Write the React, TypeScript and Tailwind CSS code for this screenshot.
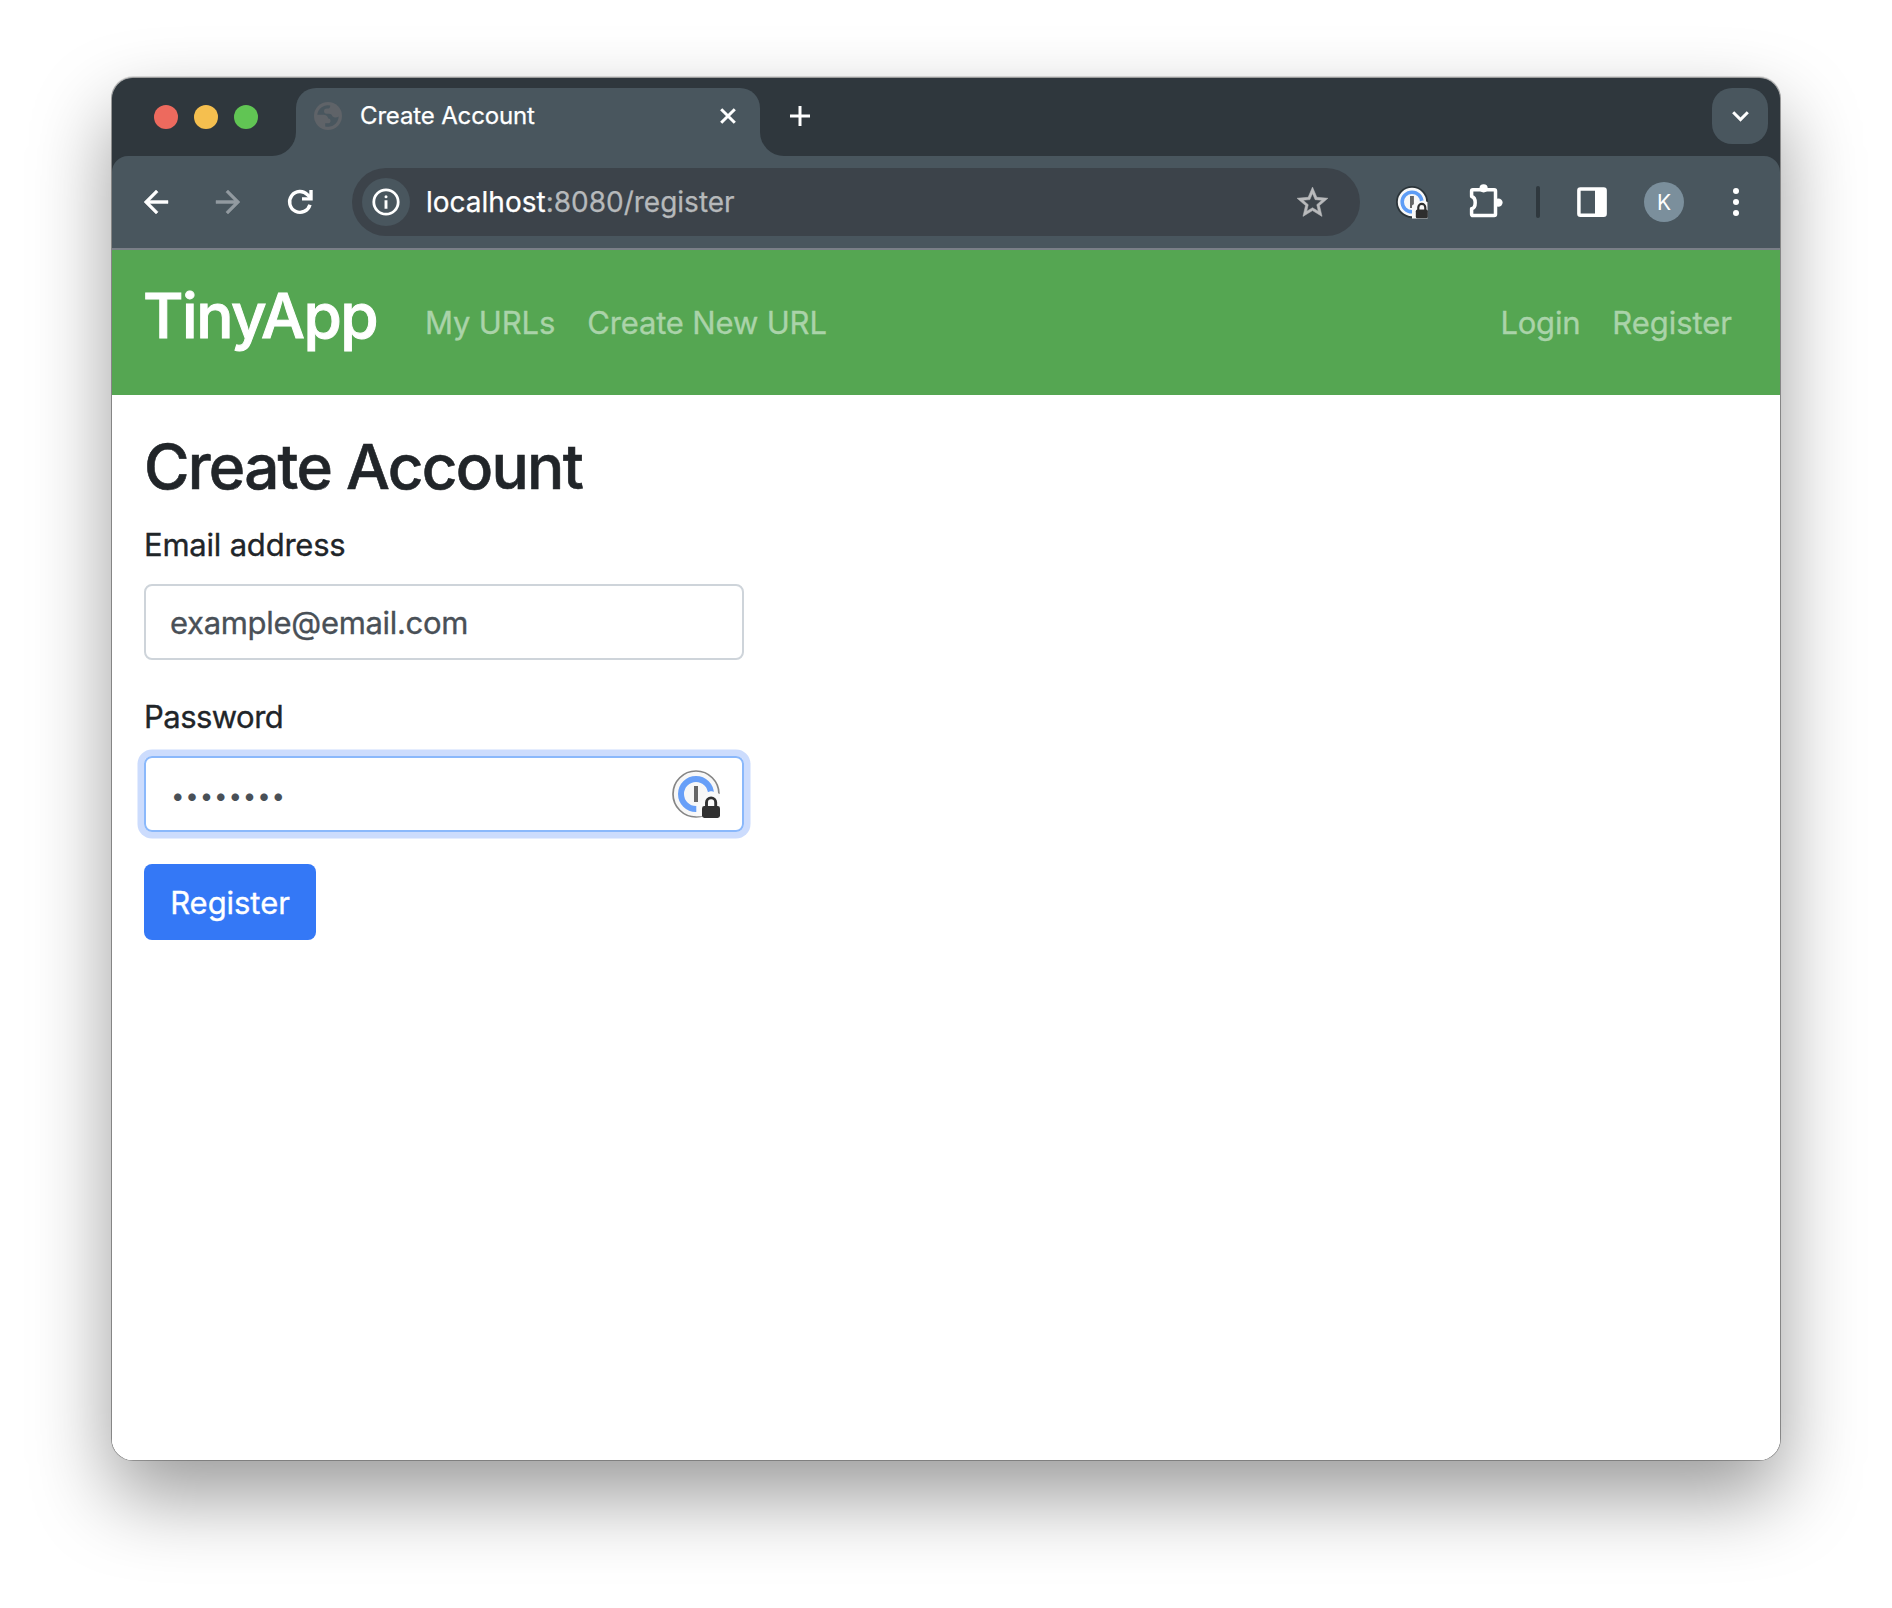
const ArrowIcon = ({ flip = false, color }: { flip?: boolean; color: string }) => (
  <svg width="36" height="36" viewBox="0 0 24 24" fill={color} stroke={color} strokeWidth="0.3" className={flip ? "rotate-180" : ""}>
    <path d="M20 11H7.83l5.59-5.59L12 4l-8 8 8 8 1.41-1.41L7.83 13H20v-2z" />
  </svg>
);

const ReloadIcon = () => (
  <svg width="36" height="36" viewBox="0 0 36 36" fill="none" stroke="#fff" strokeWidth="3.4">
    <path d="M28 20.800A10.400 10.400 0 1 1 25.600 10.800L28.600 13.800" />
    <path d="M29 6V14.900H20" />
  </svg>
);

const GlobeIcon = () => (
  <svg width="28" height="28" viewBox="0 0 28 28">
    <circle cx="14" cy="14" r="14" fill="#5f6368" />
    <path
      d="M16.200 3.400A10.800 10.800 0 0 0 3.300 12.800H9.500C12 12.800 13.800 14.400 14.300 16.600C16 16.600 16.600 17.800 16.600 19C16.600 20.400 15.500 21.300 14.200 21.300H11.200V24.400A10.800 10.800 0 0 0 24.700 14.600C22.500 16.200 19.300 15.900 18 13.600C17.600 12.600 16.600 11.800 15 11.800H12.600C10.800 11.800 10 10.400 10 9C10 7.300 11.400 6.500 12.800 6.500H14.400C15.600 6.300 16.300 5 16.200 3.400Z"
      fill="#49565e"
    />
  </svg>
);

const InfoIcon = () => (
  <svg width="28" height="28" viewBox="0 0 28 28">
    <circle cx="14" cy="14" r="12.200" fill="none" stroke="#fff" strokeWidth="2.800" />
    <circle cx="14" cy="8.800" r="1.500" fill="#fff" />
    <path d="M14 12.200v8.600" stroke="#fff" strokeWidth="2.900" />
  </svg>
);

const StarIcon = () => (
  <svg width="37" height="37" viewBox="0 0 24 24" fill="#b9babc" stroke="#b9babc" strokeWidth="0.35">
    <path d="M22 9.240l-7.190-.620L12 2 9.190 8.630 2 9.240l5.460 4.730L5.820 21 12 17.270 18.180 21l-1.630-7.030L22 9.240zM12 15.400l-3.760 2.270 1-4.280-3.320-2.880 4.380-.380L12 6.100l1.710 4.040 4.380.380-3.320 2.880 1 4.280L12 15.400z" />
  </svg>
);

const VaultBadge = () => (
  <svg width="32" height="34" viewBox="0 0 32 34">
    <circle cx="16" cy="17" r="16" fill="#2b3439" />
    <circle cx="16" cy="17" r="14.200" fill="#f8f8f8" />
    <circle cx="16" cy="17" r="9.800" fill="none" stroke="#5e9df6" strokeWidth="3.600" />
    <rect x="14" y="11" width="3.900" height="12" fill="#666" />
    <path d="M16 33.500V20.500C18 19 22 16.500 27 15.500L31.500 17V33.500Z" fill="#f8f8f8" />
    <rect x="19.800" y="24.600" width="12" height="8.700" rx="1.600" fill="#2e2e2e" />
    <path d="M22.300 25V22.400a3.500 3.500 0 0 1 7 0V25" fill="none" stroke="#2e2e2e" strokeWidth="2.200" />
  </svg>
);

const PuzzleIcon = () => (
  <svg width="38" height="40" viewBox="0 0 38 40">
    <path
      d="M6.900 7.800H28.200Q29.500 7.800 29.500 9.100V32.200Q29.500 33.500 28.200 33.500H6.900Q5.600 33.500 5.600 32.200V26.800C10.400 25.500 10.400 15.800 5.600 14.500V9.100Q5.600 7.800 6.900 7.800Z"
      fill="none"
      stroke="#fff"
      strokeWidth="3.500"
      strokeLinejoin="round"
    />
    <circle cx="17.600" cy="6.300" r="4.100" fill="#fff" />
    <circle cx="32.400" cy="20.600" r="4.200" fill="#fff" />
  </svg>
);

const SidePanelIcon = () => (
  <svg width="30" height="30" viewBox="0 0 30 30">
    <rect x="1.900" y="2" width="26.200" height="26.200" rx="1.500" fill="none" stroke="#fff" strokeWidth="3.500" />
    <path d="M18 2H28V28H18Z" fill="#fff" />
  </svg>
);

const VaultFieldIcon = () => (
  <svg width="48" height="48" viewBox="0 0 48 48">
    <circle cx="24" cy="24" r="23" fill="#f7f7f7" stroke="#858585" strokeWidth="1.700" />
    <circle cx="24" cy="24" r="15" fill="none" stroke="#679ff8" strokeWidth="6" />
    <rect x="22" y="16" width="4" height="16" fill="#666" />
    <path d="M24.300 46.200V35.500C27 33.500 30 31 31.500 27.500C33 24 35.500 21.300 40 21.300L48 24V46.200Z" fill="#f9f9f9" />
    <rect x="30" y="36" width="18" height="12" rx="2.400" fill="#303030" />
    <path d="M34.500 37V32.500a4.600 4.600 0 0 1 9.200 0V37" fill="none" stroke="#303030" strokeWidth="2.900" />
  </svg>
);

const TabStrip = () => (
  <div className="flex h-[78px] shrink-0 bg-[#49565e]">
    <div className="flex w-[184px] gap-4 rounded-br-[24px] bg-[#2f373d] pt-[27px] pl-[42px]">
      <span className="size-6 rounded-full bg-[#ed6a5e]" />
      <span className="size-6 rounded-full bg-[#f5bf4f]" />
      <span className="size-6 rounded-full bg-[#61c554]" />
    </div>
    <div className="flex w-[464px] flex-col">
      <div className="bg-[#2f373d] pt-[10px]">
        <div className="flex h-14 items-center rounded-t-[20px] bg-[#49565e] pr-[24px] pl-[18px]">
          <GlobeIcon />
          <span className="ml-[18px] grow text-[24px] leading-[54px] tracking-[-0.15px] text-white [-webkit-text-stroke:0.25px]">
            Create Account
          </span>
          <svg width="16" height="16" viewBox="0 0 16 16" stroke="#fff" strokeWidth="3">
            <path d="M1.200 1.200L14.800 14.800M14.800 1.200L1.200 14.800" />
          </svg>
        </div>
      </div>
    </div>
    <div className="flex grow justify-between rounded-bl-[24px] bg-[#2f373d] pt-[10px] pr-[12px] pl-[30px]">
      <svg width="20" height="20" viewBox="0 0 20 20" stroke="#fff" strokeWidth="3" className="mt-[18px]">
        <path d="M10 0V20M0 10H20" />
      </svg>
      <div className="flex h-14 w-14 items-center justify-center rounded-[20px] bg-[#49565e]">
        <svg width="17" height="11" viewBox="0 0 17 11" fill="none" stroke="#fff" strokeWidth="3">
          <path d="M1.200 1.300L8.500 8.600L15.800 1.300" />
        </svg>
      </div>
    </div>
  </div>
);

const Toolbar = () => (
  <div className="bg-[#2f373d]">
    <div className="flex h-[94px] items-center rounded-t-[16px] border-b-2 border-[#7a7f88] bg-[#49565e] pl-[26px]">
      <ArrowIcon color="#fff" />
      <div className="ml-9">
        <ArrowIcon flip color="#929aa0" />
      </div>
      <div className="ml-9">
        <ReloadIcon />
      </div>
      <div className="ml-[34px] flex h-[68px] w-[1008px] items-center rounded-full bg-[#3c434a] pr-[29px] pl-[10px]">
        <span className="flex size-12 items-center justify-center rounded-full bg-[#49565e]">
          <InfoIcon />
        </span>
        <span className="ml-4 grow text-[28px] leading-[68px] text-white [-webkit-text-stroke:0.25px]">
          localhost<span className="text-[#b6b9bb]">:8080/register</span>
        </span>
        <StarIcon />
      </div>
      <div className="ml-9">
        <VaultBadge />
      </div>
      <div className="ml-[38px]">
        <PuzzleIcon />
      </div>
      <span className="ml-8 h-8 w-1 rounded-sm bg-[#2f383e]" />
      <div className="ml-[37px]">
        <SidePanelIcon />
      </div>
      <span className="ml-[37px] flex size-10 items-center justify-center rounded-full bg-[#7b8f9c] pt-px text-[21px] text-white">
        K
      </span>
      <span className="ml-[49px] flex flex-col gap-[5px]">
        <i className="size-1.5 rounded-full bg-white" />
        <i className="size-1.5 rounded-full bg-white" />
        <i className="size-1.5 rounded-full bg-white" />
      </span>
    </div>
  </div>
);

const NavBar = () => (
  <nav className="flex h-[145px] shrink-0 bg-[#55a652] pr-12 pl-[31px] text-[31px] leading-[145px] text-[#aad3a9] [-webkit-text-stroke:0.35px]">
    <a className="mr-[47px] w-[235px] text-[62px] leading-[131px] font-medium tracking-[-1.47px] text-white [-webkit-text-stroke:1px]">
      TinyApp
    </a>
    <a className="mr-8 tracking-[-0.15px]">My URLs</a>
    <a className="mr-auto tracking-[-0.15px]">Create New URL</a>
    <a className="mr-8 tracking-[-0.25px]">Login</a>
    <a className="tracking-[-0.03px]">Register</a>
  </nav>
);

const RegisterForm = () => (
  <main className="grow bg-white px-8 pt-8 text-[31px] text-[#212529] [-webkit-text-stroke:0.35px]">
    <h1 className="h-[77px] text-[62px] leading-[79px] font-medium tracking-[-1.72px] [-webkit-text-stroke:0.6px]">Create Account</h1>
    <label className="mt-4 block h-[48px] leading-[50px] tracking-[-0.21px]">Email address</label>
    <div className="mt-4 h-[76px] w-[600px] rounded-lg border-2 border-[#ced4da] px-6 leading-[73px] tracking-[-0.31px] text-[#495057]">
      example@email.com
    </div>
    <label className="mt-8 block h-[48px] leading-[50px] tracking-[-0.53px]">Password</label>
    <div className="mt-4 flex h-[76px] w-[600px] items-center justify-between rounded-lg border-2 border-[#8ab8fb] pr-[22px] pl-[25px] text-[#495057] shadow-[0_0_0_6.500px_#ccdcfd]">
      <span className="pt-[3px] text-[24px] tracking-[0.87px] [-webkit-text-stroke:0px]">••••••••</span>
      <VaultFieldIcon />
    </div>
    <button className="mt-8 block h-[76px] w-[172px] rounded-lg bg-[#3478f6] leading-[78px] tracking-[-0.05px] text-white">
      Register
    </button>
  </main>
);

export default function App() {
  return (
    <div className="h-[1608px] w-[1892px] overflow-hidden bg-white pt-[78px] pl-[112px] font-[Inter,sans-serif]">
      <div className="w-[1668px] rounded-[21px] shadow-[0_0_0_1px_rgba(0,0,0,0.26),0_-1px_0_1px_rgba(0,0,0,0.12),0_36px_80px_rgba(0,0,0,0.4)]">
        <div className="flex h-[1382px] flex-col overflow-hidden rounded-[21px] bg-white">
          <TabStrip />
          <Toolbar />
          <NavBar />
          <RegisterForm />
        </div>
      </div>
    </div>
  );
}
